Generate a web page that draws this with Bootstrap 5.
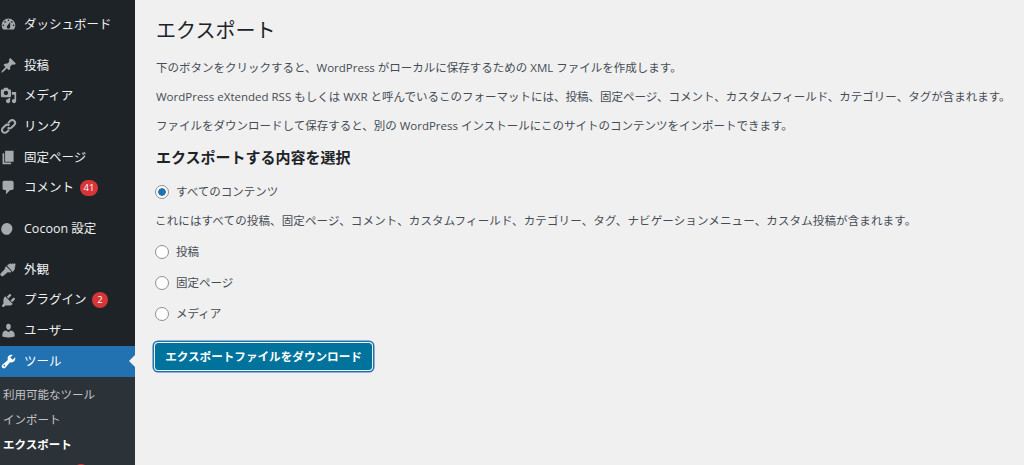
<!DOCTYPE html>
<html lang="ja">
<head>
    <meta charset="UTF-8">
    <meta name="viewport" content="width=device-width, initial-scale=1.0">
    <title>エクスポート</title>
    <link href="https://cdn.jsdelivr.net/npm/bootstrap@5.3.0/dist/css/bootstrap.min.css" rel="stylesheet">
    <style>
        html, body { height: 465px; overflow: hidden; }
        body { font-family: "Open Sans", "Noto Sans CJK JP", sans-serif; background: #f0f0f1; color: #454c53; font-size: 11.5px; }
        .wp-side { width: 135px; height: 465px; background: #1d2327; flex: none; padding-top: 9px; overflow: hidden; }
        .side-item { height: 30.7px; color: #f0f0f1; font-size: 12.5px; text-decoration: none; padding: 2px 0 0 24px; position: relative; }
        .side-item svg { position: absolute; left: 0; top: 7px; width: 17px; height: 17px; fill: #a7aaad; }
        .side-gap { margin-top: 10px; }
        .side-item.current { background: #2271b1; color: #fff; }
        .side-item.current svg { fill: #fff; }
        .side-item.current::after { content: ""; position: absolute; right: 0; top: 9px; border: 6px solid transparent; border-right-color: #f0f0f1; }
        .count-pill { background: #d63638; color: #fff; font-size: 9.5px; min-width: 16px; height: 16px; border-radius: 8px; padding: 0 4px; margin: -1px 0 0 5.5px; line-height: 16px; text-align: center; }
        .side-sub { background: #2c3338; padding-top: 5px; height: 100px; font-size: 11.5px; }
        .side-sub a { display: block; height: 25px; line-height: 25px; padding-left: 3px; color: #c3c4c7; text-decoration: none; }
        .side-sub a.now { color: #fff; font-weight: 700; }
        .side-sub .count-pill { display: block; margin: 7px 0 0 73px; width: 16px; }
        .wp-main { padding: 15px 0 0 21px; min-width: 0; }
        .wp-main h1 { font-size: 20px; font-weight: 400; color: #1d2327; line-height: 32px; margin: 0 0 13px; }
        .wp-main p { margin: 0 0 13px; line-height: 16px; white-space: nowrap; }
        .wp-main p.wide-line { letter-spacing: .13px; margin: 13px 0 15px -1px; }
        .wp-main h2 { font-size: 15px; font-weight: 700; color: #1d2327; line-height: 20px; margin: 0 0 17px; }
        .pick-row { display: flex; align-items: center; gap: 7px; height: 16px; }
        .pick-row .form-check-input { width: 14px; height: 14px; margin: 0 0 0 -1px; background-color: #fff; border: 1px solid #8c8f94; flex: none; }
        .pick-row .form-check-input:checked { background: radial-gradient(circle, #2271b1 0 3.5px, #fff 4px); border-color: #8c8f94; }
        .pick-row + .pick-row { margin-top: 15px; }
        .export-btn { display: block; background: #00739c; border: 1px solid #00739c; color: #fff; font-size: 11.6px; font-weight: 600; height: 27px; width: 217px; padding: 0; border-radius: 3px; box-shadow: 0 0 0 1px #f0f0f1, 0 0 0 2.5px #2271b1; margin: 21px 0 0 -1px; }
    </style>
</head>
<body>
    <div class="d-flex">
        <nav class="wp-side">
            <a class="side-item d-flex align-items-center" href="#"><svg viewBox="0 0 20 20"><path d="M3.760 16h12.480c1.100-1.370 1.760-3.110 1.760-5 0-4.420-3.580-8-8-8s-8 3.580-8 8c0 1.890.66 3.630 1.760 5zM10 4c.55 0 1 .45 1 1s-.45 1-1 1-1-.45-1-1 .45-1 1-1zM6 6c.55 0 1 .45 1 1s-.45 1-1 1-1-.45-1-1 .45-1 1-1zm8 0c.55 0 1 .45 1 1s-.45 1-1 1-1-.45-1-1 .45-1 1-1zm-5.370 5.550L12 7v6c0 1.100-.9 2-2 2s-2-.9-2-2c0-.57.24-1.080.63-1.450zM4 10c.55 0 1 .45 1 1s-.45 1-1 1-1-.45-1-1 .45-1 1-1zm12 0c.55 0 1 .45 1 1s-.45 1-1 1-1-.45-1-1 .45-1 1-1z"/></svg>ダッシュボード</a>
            <a class="side-item side-gap d-flex align-items-center" href="#"><svg viewBox="0 0 20 20"><path d="M10.440 3.020l1.820-1.820 6.360 6.350-1.830 1.820c-1.050-.68-2.480-.57-3.410.36l-.75.75c-.92.93-1.040 2.350-.35 3.410l-1.830 1.820-2.410-2.410-2.800 2.790c-.42.42-3.380 2.710-3.800 2.290s1.860-3.390 2.280-3.810l2.790-2.790L4.100 9.360l1.830-1.820c1.050.69 2.480.57 3.400-.36l.75-.75c.93-.92 1.050-2.350.36-3.410z"/></svg>投稿</a>
            <a class="side-item d-flex align-items-center" href="#"><svg viewBox="0 0 20 20"><path d="M13 11V4c0-.55-.45-1-1-1h-1.670L9 1H5L3.670 3H2c-.55 0-1 .45-1 1v7c0 .55.45 1 1 1h10c.55 0 1-.45 1-1zM7 4.500c1.380 0 2.500 1.120 2.500 2.500S8.380 9.500 7 9.500 4.500 8.380 4.500 7 5.620 4.500 7 4.500zM14 6h5v10.500c0 1.380-1.120 2.500-2.500 2.500S14 17.880 14 16.500s1.120-2.500 2.500-2.500c.17 0 .34.020.5.050V9h-3V6zm-4 8.050V13h2v3.500c0 1.380-1.120 2.500-2.500 2.500S7 17.880 7 16.500 8.120 14 9.500 14c.17 0 .34.020.5.050z"/></svg>メディア</a>
            <a class="side-item d-flex align-items-center" href="#"><svg viewBox="0 0 20 20"><path fill="none" stroke="#a7aaad" stroke-width="2.400" d="M9.500 6l2.500-2.500a3.300 3.300 0 0 1 4.700 4.700l-3 3a3.300 3.300 0 0 1-4.700 0M10.500 14l-2.500 2.500a3.300 3.300 0 0 1-4.700-4.700l3-3a3.300 3.300 0 0 1 4.700 0"/></svg>リンク</a>
            <a class="side-item d-flex align-items-center" href="#"><svg viewBox="0 0 20 20"><path d="M6 15V2h10v13H6zm-1 1h8v2H3V5h2v11z"/></svg>固定ページ</a>
            <a class="side-item d-flex align-items-center" href="#"><svg viewBox="0 0 20 20"><path d="M5 2h9c1.100 0 2 .9 2 2v7c0 1.100-.9 2-2 2h-2l-5 5v-5H5c-1.100 0-2-.9-2-2V4c0-1.100.9-2 2-2z"/></svg>コメント<span class="count-pill">41</span></a>
            <a class="side-item side-gap d-flex align-items-center" href="#"><svg viewBox="0 0 20 20"><ellipse cx="8" cy="10.500" rx="6.500" ry="7" transform="rotate(15 8 10.500)"/></svg>Cocoon 設定</a>
            <a class="side-item side-gap d-flex align-items-center" href="#"><svg viewBox="0 0 20 20"><path d="M8.200 5.200L12 2.500l1 1.200 1.500-1.200 1 1 1.500-.8 1.500 1-1 1.800.8 1-1.300 1.500.8 1-2.800 3.800zM7.300 6.300l6 6-1.600 1.600-2.300-.9-5.600 4.500c-1 .8-2.300.4-3-.3-.6-.7-.6-1.900.2-2.700L6 9.200l-.4-1.200z"/></svg>外観</a>
            <a class="side-item d-flex align-items-center" href="#"><svg viewBox="0 0 20 20"><path d="M13.110 4.360L9.870 7.600 8 5.730l3.240-3.240c.35-.34 1.050-.2 1.560.32.52.51.66 1.210.31 1.550zm-8 1.770l.91-1.120 9.010 9.010-1.190.84c-.71.710-2.630 1.160-3.820 1.160H6.140L4.900 17.260c-.59.59-1.540.59-2.120 0-.59-.58-.59-1.530 0-2.120l1.240-1.240v-3.880c0-1.130.41-3.050 1.090-3.890zm7.260 3.970l3.240-3.240c.34-.35 1.040-.21 1.550.31.52.510.66 1.210.31 1.550l-3.240 3.250z"/></svg>プラグイン<span class="count-pill">2</span></a>
            <a class="side-item d-flex align-items-center" href="#"><svg viewBox="0 0 20 20"><path d="M10 9.250c-2.270 0-2.730-3.440-2.730-3.440C7 4.020 7.820 2 9.970 2c2.160 0 2.980 2.020 2.710 3.810 0 0-.41 3.440-2.680 3.440zm0 2.570L12.720 10c2.390 0 4.520 2.330 4.520 4.530v2.490s-3.650 1.130-7.240 1.130c-3.650 0-7.240-1.130-7.240-1.130v-2.490c0-2.250 1.940-4.480 4.150-4.480z"/></svg>ユーザー</a>
            <a class="side-item current d-flex align-items-center" href="#"><svg viewBox="0 0 20 20"><path d="M16.680 9.770c-1.340 1.340-3.300 1.670-4.950.99l-5.410 6.520c-.99.99-2.590.99-3.570 0-.99-.98-.99-2.580 0-3.570l6.520-5.420c-.68-1.650-.35-3.610.99-4.950 1.280-1.280 3.120-1.620 4.720-1.060l-2.890 2.890 2.820 2.820 2.860-2.870c.53 1.580.18 3.390-1.090 4.670zM4.360 15.640c.39.390 1.020.39 1.410 0 .39-.39.39-1.020 0-1.410-.39-.39-1.020-.39-1.410 0-.39.39-.39 1.020 0 1.410z"/></svg>ツール</a>
            <div class="side-sub">
                <a href="#">利用可能なツール</a>
                <a href="#">インポート</a>
                <a class="now" href="#">エクスポート</a>
                <span class="count-pill"></span>
            </div>
        </nav>
        <main class="wp-main flex-grow-1">
            <h1>エクスポート</h1>
            <p>下のボタンをクリックすると、WordPress がローカルに保存するための XML ファイルを作成します。</p>
            <p>WordPress eXtended RSS もしくは WXR と呼んでいるこのフォーマットには、投稿、固定ページ、コメント、カスタムフィールド、カテゴリー、タグが含まれます。</p>
            <p>ファイルをダウンロードして保存すると、別の WordPress インストールにこのサイトのコンテンツをインポートできます。</p>
            <h2>エクスポートする内容を選択</h2>
            <div class="pick-row"><input class="form-check-input" type="radio" name="content" id="c1" checked><label for="c1">すべてのコンテンツ</label></div>
            <p class="wide-line">これにはすべての投稿、固定ページ、コメント、カスタムフィールド、カテゴリー、タグ、ナビゲーションメニュー、カスタム投稿が含まれます。</p>
            <div class="pick-row"><input class="form-check-input" type="radio" name="content" id="c2"><label for="c2">投稿</label></div>
            <div class="pick-row"><input class="form-check-input" type="radio" name="content" id="c3"><label for="c3">固定ページ</label></div>
            <div class="pick-row"><input class="form-check-input" type="radio" name="content" id="c4"><label for="c4">メディア</label></div>
            <button class="btn export-btn" type="button">エクスポートファイルをダウンロード</button>
        </main>
    </div>
    <script src="https://cdn.jsdelivr.net/npm/bootstrap@5.3.0/dist/js/bootstrap.bundle.min.js"></script>
</body>
</html>
